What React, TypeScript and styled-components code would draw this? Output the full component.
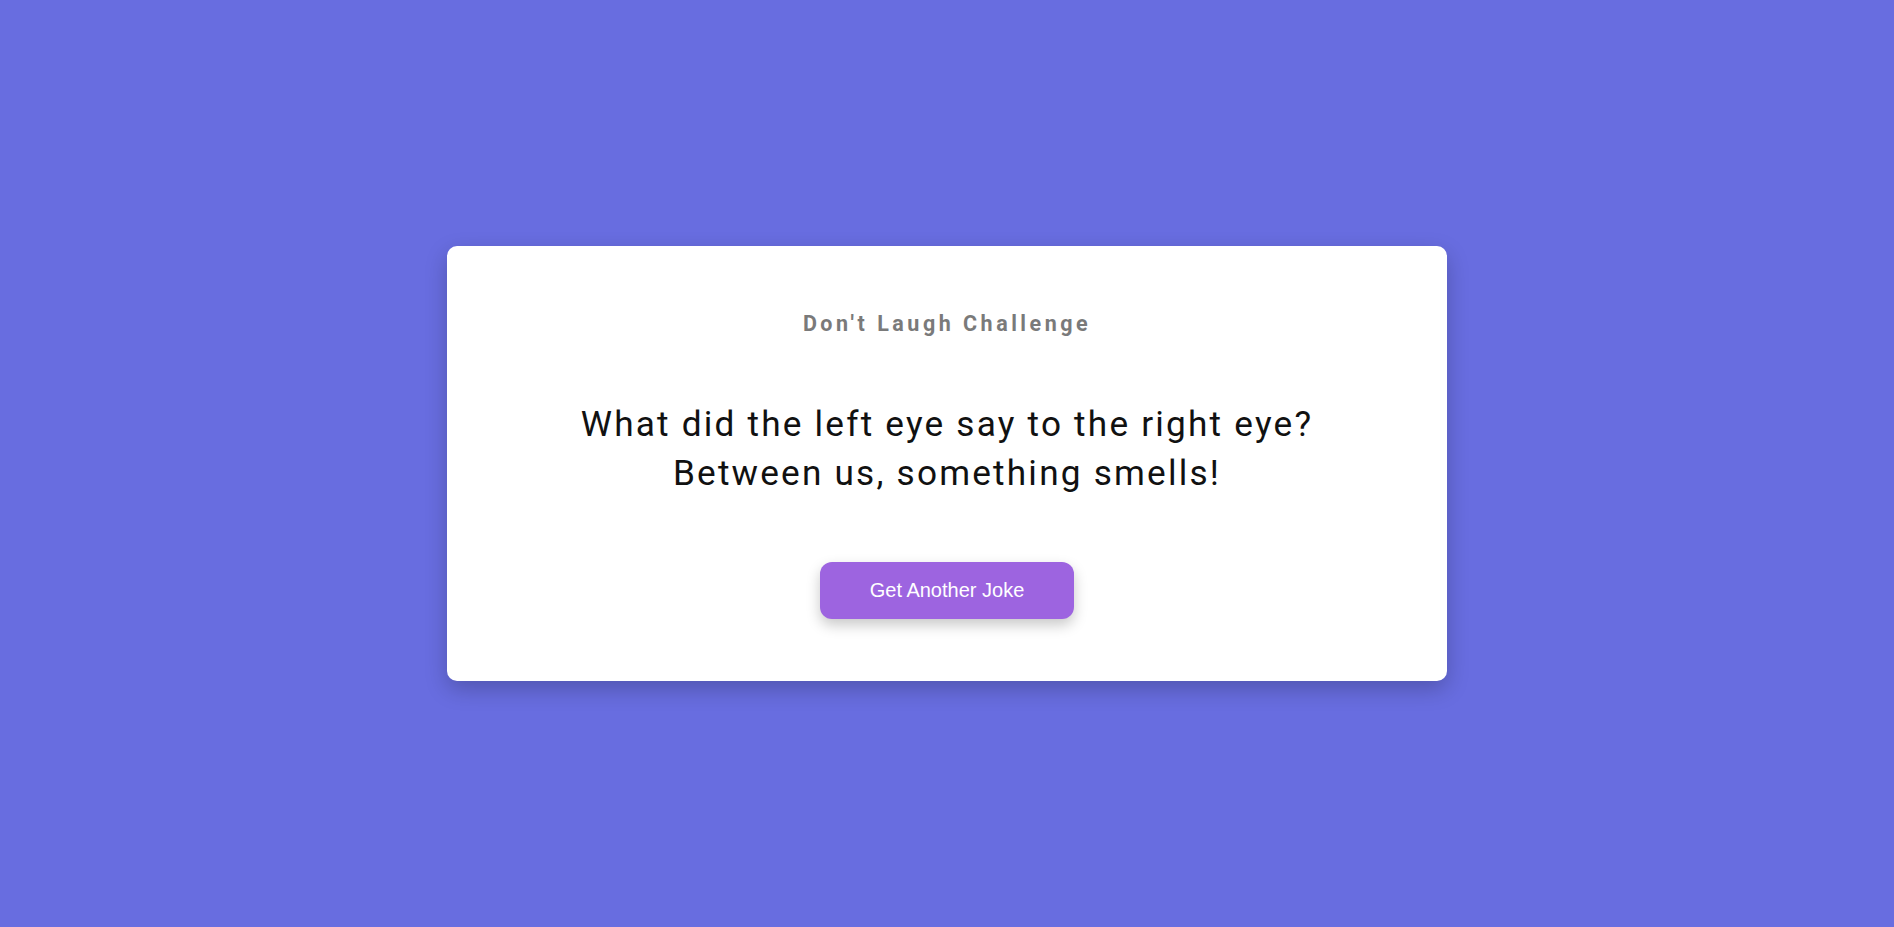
import * as React from 'react'
import styled, { createGlobalStyle } from 'styled-components'

const GlobalStyle = createGlobalStyle`
  * {
    box-sizing: border-box;
  }

  body {
    margin: 0;
    background-color: #686de0;
    font-family: Roboto, "Liberation Sans", sans-serif;
  }
`

const Page = styled.main`
  min-height: 100vh;
  display: flex;
  align-items: center;
  justify-content: center;
`

const Card = styled.section`
  width: 1000px;
  padding: 65px 40px 62px;
  display: flex;
  flex-direction: column;
  align-items: center;
  background-color: #fff;
  border-radius: 10px;
  box-shadow: 0 8px 22px rgba(0, 0, 0, 0.22);
  text-align: center;
`

const Title = styled.h3`
  margin: 0;
  font-size: 21.5px;
  font-weight: 700;
  letter-spacing: 3.5px;
  line-height: normal;
  color: #7a7a7a;
`

const Joke = styled.p`
  margin: 64px 0 64px;
  font-size: 35.2px;
  font-weight: 400;
  line-height: 1.4;
  letter-spacing: 2.2px;
  color: #111;
`

const Button = styled.button`
  padding: 17px 50px;
  border: none;
  border-radius: 12px;
  background-color: #9d64e0;
  color: #fff;
  font-family: "Liberation Sans", Arial, sans-serif;
  font-size: 20px;
  line-height: normal;
  cursor: pointer;
  box-shadow: 0 6px 14px rgba(0, 0, 0, 0.22);
`

const App: React.FC = () => {
  return (
    <>
      <GlobalStyle />
      <Page>
        <Card>
          <Title>Don't Laugh Challenge</Title>
          <Joke>
            What did the left eye say to the right eye?
            <br />
            Between us, something smells!
          </Joke>
          <Button>Get Another Joke</Button>
        </Card>
      </Page>
    </>
  )
}

export default App
